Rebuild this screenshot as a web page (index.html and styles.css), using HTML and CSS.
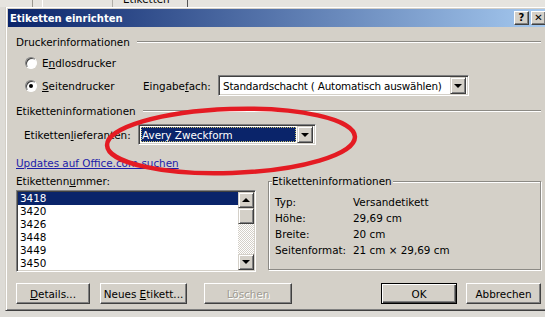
FILE: index.html
```html
<!DOCTYPE html>
<html lang="de">
  <head>
    <meta charset="UTF-8" />
    <meta name="viewport" content="width=device-width, initial-scale=1.0" />
    <title>Etiketten einrichten</title>
    <link rel="stylesheet" href="styles.css">
  </head>

  <body>
    <div class="backdrop">
      <div class="tab tab-edge"></div>
      <div class="tab tab-first"></div>
      <div class="tab tab-second"><span>Etiketten</span></div>
    </div>

    <div class="window">
      <div class="titlebar">
        <span class="title">Etiketten einrichten</span>
        <div class="caption-buttons">
          <span class="cap-btn">?</span>
          <span class="cap-btn">✕</span>
        </div>
      </div>

      <div class="content">
        <div class="section-head">
          <span>Druckerinformationen</span>
          <div class="etched"></div>
        </div>
        <div class="radio-row">
          <span class="radio"></span>
          <span class="radio-label">E<u>n</u>dlosdrucker</span>
        </div>
        <div class="radio-row tray-row">
          <span class="radio checked"></span>
          <span class="radio-label"><u>S</u>eitendrucker</span>
          <span class="tray-label">Eingabe<u>f</u>ach:</span>
          <div class="combo tray">
            <span class="combo-text">Standardschacht ( Automatisch auswählen)</span>
            <span class="drop-btn"><i class="arrow"></i></span>
          </div>
        </div>

        <div class="section-head second">
          <span>Etiketteninformationen</span>
          <div class="etched"></div>
        </div>
        <div class="vendor-row">
          <span class="vendor-label">Etiketten<u>l</u>ieferanten:</span>
          <div class="combo vendor">
            <span class="combo-text selected">Avery Zweckform</span>
            <span class="drop-btn"><i class="arrow"></i></span>
          </div>
        </div>
        <a class="update-link" href="#">Updates auf Office.com suchen</a>

        <div class="lower">
          <div class="number-col">
            <span class="list-label">Etikettenn<u>u</u>mmer:</span>
            <div class="listbox">
              <ul class="items">
                <li class="selected">3418</li>
                <li>3420</li>
                <li>3426</li>
                <li>3448</li>
                <li>3449</li>
                <li>3450</li>
              </ul>
              <div class="scrollbar">
                <span class="sb-btn"><i class="arrow up"></i></span>
                <span class="sb-thumb"></span>
                <span class="sb-track"></span>
                <span class="sb-btn"><i class="arrow"></i></span>
              </div>
            </div>
          </div>

          <fieldset class="info-box">
            <legend>Etiketteninformationen</legend>
            <div class="info-row"><span class="info-key">Typ:</span><span>Versandetikett</span></div>
            <div class="info-row"><span class="info-key">Höhe:</span><span>29,69 cm</span></div>
            <div class="info-row"><span class="info-key">Breite:</span><span>20 cm</span></div>
            <div class="info-row"><span class="info-key">Seitenformat:</span><span>21 cm × 29,69 cm</span></div>
          </fieldset>
        </div>

        <div class="button-row">
          <button class="btn details"><u>D</u>etails...</button>
          <button class="btn new-label">Neues <u>E</u>tikett...</button>
          <button class="btn delete" disabled>Löschen</button>
          <span class="spacer"></span>
          <button class="btn ok">OK</button>
          <button class="btn cancel">Abbrechen</button>
        </div>
      </div>
    </div>

    <!-- red marker someone drew over the screenshot -->
    <svg class="annotation" width="545" height="317" viewBox="0 0 545 317">
      <ellipse cx="231" cy="141" rx="124" ry="32" transform="rotate(-2 231 141)" />
    </svg>
  </body>
</html>
```

FILE: styles.css
```css
body {
  margin: 0;
  width: 545px;
  height: 317px;
  overflow: hidden;
  position: relative;
  background: #dddbd6;
  font-family: "DejaVu Sans", sans-serif;
  font-size: 10.4px;
  color: #000;
}

u {
  text-decoration: underline;
  text-underline-offset: 1px;
}

/* window behind the dialog */
.backdrop {
  height: 7px;
  display: flex;
  background: #e6e4df;
  overflow: hidden;
}

.tab {
  height: 7px;
}

.tab-edge {
  width: 9px;
  margin-left: 32px;
  border-left: 1px solid #9a9890;
  border-right: 1px solid #fff;
}

.tab-first {
  width: 69px;
  border-right: 1px solid #b0aea8;
}

.tab-second {
  width: 64px;
  border-right: 1px solid #555;
  line-height: 14px;
  padding-left: 10px;
}

.tab-second span {
  display: block;
  margin-top: -8px;
}

/* dialog */
.window {
  box-sizing: border-box;
  width: 544px;
  height: 304px;
  margin-left: 5px;
  padding: 2px 0 0 2px;
  background: #d4d0c8;
  border-left: 1px solid #d4d0c8;
  border-bottom: 1px solid #404040;
  box-shadow: inset 1px 1px #fff, inset 0 -1px #808080;
}

.titlebar {
  height: 18px;
  display: flex;
  align-items: center;
  justify-content: space-between;
  padding: 0 3px 0 2px;
  background: linear-gradient(90deg, #0a246a, #a6caf0);
  color: #fff;
}

.title {
  font-weight: bold;
  font-size: 10px;
}

.caption-buttons {
  display: flex;
  gap: 2px;
}

.cap-btn {
  box-sizing: border-box;
  width: 15px;
  height: 14px;
  background: #d4d0c8;
  color: #000;
  font-weight: bold;
  font-size: 10px;
  line-height: 12px;
  text-align: center;
  border: 1px solid;
  border-color: #fff #404040 #404040 #fff;
  box-shadow: inset -1px -1px #808080;
}

.content {
  width: 525px;
  padding-left: 8px;
  display: flex;
  flex-direction: column;
}

.section-head {
  display: flex;
  align-items: center;
  height: 14px;
  margin-top: 8px;
}

.section-head.second {
  margin-top: 8px;
}

.etched {
  flex: 1;
  margin-left: 7px;
  border-top: 1px solid #8c8a85;
  border-bottom: 1px solid #fff;
}

.radio-row {
  display: flex;
  align-items: center;
  height: 16px;
  margin-top: 6px;
  padding-left: 9px;
}

.radio-row.tray-row {
  height: 21px;
  margin-top: 4px;
}

.radio {
  box-sizing: border-box;
  width: 12px;
  height: 12px;
  border-radius: 50%;
  background: #fff;
  border: 1px solid;
  border-color: #808080 #fff #fff #808080;
  box-shadow: inset 1px 1px #404040;
  display: flex;
  align-items: center;
  justify-content: center;
}

.radio.checked::after {
  content: "";
  width: 4px;
  height: 4px;
  border-radius: 50%;
  background: #000;
}

.radio-label {
  margin-left: 5px;
  width: 101px;
}

.tray-label {
  width: 75px;
}

.combo {
  box-sizing: border-box;
  height: 21px;
  display: flex;
  align-items: center;
  padding: 2px;
  background: #fff;
  border: 1px solid;
  border-color: #808080 #fff #fff #808080;
  box-shadow: inset 1px 1px #404040, inset -1px -1px #d4d0c8;
}

.combo.tray {
  width: 251px;
  letter-spacing: -0.2px;
}

.combo-text {
  flex: 1;
  padding-left: 2px;
  white-space: nowrap;
  overflow: hidden;
}

.combo-text.selected {
  align-self: stretch;
  display: flex;
  align-items: center;
  margin-right: 1px;
  padding-left: 1px;
  background: #0a246a;
  color: #fff;
  outline: 1px dotted #c8c070;
  outline-offset: -1px;
}

.drop-btn {
  box-sizing: border-box;
  flex: none;
  width: 16px;
  height: 17px;
  display: flex;
  align-items: center;
  justify-content: center;
  background: #d4d0c8;
  border: 1px solid;
  border-color: #d4d0c8 #404040 #404040 #d4d0c8;
  box-shadow: inset 1px 1px #fff, inset -1px -1px #808080;
}

.arrow {
  width: 0;
  height: 0;
  border-left: 4px solid transparent;
  border-right: 4px solid transparent;
  border-top: 4px solid #000;
}

.arrow.up {
  border-top: 0;
  border-bottom: 4px solid #000;
}

.vendor-row {
  display: flex;
  align-items: center;
  height: 21px;
  margin-top: 6px;
  padding-left: 8px;
}

.vendor-label {
  width: 114px;
}

.combo.vendor {
  width: 178px;
}

.update-link {
  align-self: flex-start;
  margin-top: 11px;
  line-height: 14px;
  color: #1c1ca8;
}

.lower {
  display: flex;
  margin-top: 4px;
  gap: 12px;
}

.number-col {
  display: flex;
  flex-direction: column;
}

.list-label {
  line-height: 14px;
}

.listbox {
  box-sizing: border-box;
  width: 240px;
  height: 82px;
  margin-top: 2px;
  padding: 1px;
  display: flex;
  background: #fff;
  border: 1px solid;
  border-color: #808080 #fff #fff #808080;
  box-shadow: inset 1px 1px #404040, inset -1px -1px #d4d0c8;
}

.items {
  flex: 1;
  margin: 0;
  padding: 0;
  list-style: none;
}

.items li {
  height: 13px;
  line-height: 13px;
  padding-left: 2px;
}

.items li.selected {
  background: #0a246a;
  color: #fff;
}

.scrollbar {
  width: 16px;
  display: flex;
  flex-direction: column;
}

.sb-btn,
.sb-thumb {
  box-sizing: border-box;
  height: 16px;
  display: flex;
  align-items: center;
  justify-content: center;
  background: #d4d0c8;
  border: 1px solid;
  border-color: #d4d0c8 #404040 #404040 #d4d0c8;
  box-shadow: inset 1px 1px #fff, inset -1px -1px #808080;
}

.sb-track {
  flex: 1;
  background: repeating-conic-gradient(#fff 0 25%, #d4d0c8 0 50%) 0 0 / 2px 2px;
}

.info-box {
  box-sizing: border-box;
  width: 275px;
  height: 96px;
  margin: 0;
  padding: 6px 0 0 6px;
  border: 1px solid #8c8a85;
  box-shadow: inset 1px 1px #fff, 1px 1px #fff;
}

.info-box legend {
  padding: 0 1px 0 0;
  margin-left: -3px;
  line-height: 14px;
  background: #d4d0c8;
}

.info-row {
  display: flex;
  line-height: 16px;
}

.info-key {
  width: 78px;
}

.button-row {
  display: flex;
  margin-top: 11px;
}

.btn {
  box-sizing: border-box;
  height: 21px;
  padding: 0;
  font: inherit;
  color: #000;
  background: #d4d0c8;
  border: 1px solid;
  border-color: #fff #404040 #404040 #fff;
  box-shadow: inset -1px -1px #808080;
}

.btn.details {
  width: 74px;
}

.btn.new-label {
  width: 87px;
  margin-left: 10px;
}

.btn.delete {
  width: 88px;
  margin-left: 17px;
  color: #a09c94;
  text-shadow: 1px 1px #fff;
}

.spacer {
  flex: 1;
}

.btn.ok {
  width: 76px;
  border: 1px solid #000;
  box-shadow: inset 1px 1px #fff, inset -1px -1px #404040, inset -2px -2px #808080;
}

.btn.cancel {
  width: 75px;
  margin-left: 9px;
}

.annotation {
  position: absolute;
  left: 0;
  top: 0;
  pointer-events: none;
}

.annotation ellipse {
  fill: none;
  stroke: #e41b23;
  stroke-width: 4.5;
}
```
